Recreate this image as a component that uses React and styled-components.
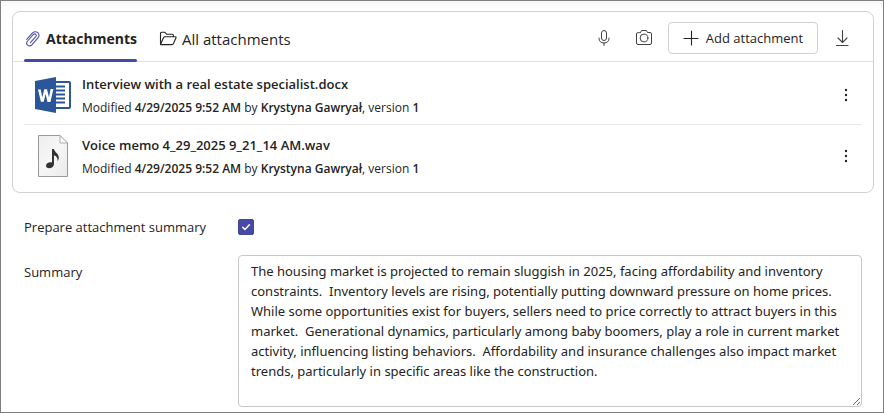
import React, { useState } from "react";
import styled, { createGlobalStyle } from "styled-components";

const GlobalStyle = createGlobalStyle`
  *, *::before, *::after { box-sizing: border-box; }
  body {
    margin: 0;
    background: #fff;
    color: #242424;
    font-family: "Open Sans", "Noto Sans", sans-serif;
    font-size: 13px;
    line-height: 20px;
  }
  button, textarea { font: inherit; color: inherit; }
`;

const Page = styled.main`
  min-height: 100vh;
  padding: 10px 9px 5px 11px;
  border: 1px solid #7f7f7f;
  background: linear-gradient(#f8f8f8, #fff 10px);
`;

const Card = styled.section`
  border: 1px solid #d1d1d1;
  border-radius: 8px;
  background: #fff;
`;

const CardHeader = styled.header`
  display: flex;
  align-items: stretch;
  justify-content: space-between;
  height: 50px;
  padding: 0 15px 0 11px;
  border-bottom: 1px solid #e0e0e0;
`;

const Tabs = styled.div`
  display: flex;
  gap: 22px;
`;

const Tab = styled.button`
  position: relative;
  display: flex;
  align-items: center;
  gap: 5px;
  height: 50px;
  padding: 3px 0 0;
  border: 0;
  background: none;
  font-size: ${(p) => (p.$active ? "14px" : "15px")};
  font-weight: ${(p) => (p.$active ? 700 : 400)};
  white-space: nowrap;
  cursor: pointer;

  &::after {
    content: "";
    position: absolute;
    inset: auto 0 0;
    height: 3px;
    border-radius: 2px;
    background: ${(p) => (p.$active ? "#444aa5" : "transparent")};
  }
`;

const Tools = styled.div`
  display: flex;
  align-items: center;
  gap: 8px;
  padding-top: 2px;
`;

const IconButton = styled.button`
  display: grid;
  place-items: center;
  width: 32px;
  height: 32px;
  padding: 0;
  border: 0;
  background: none;
  cursor: pointer;
`;

const AddButton = styled.button`
  display: flex;
  align-items: center;
  justify-content: center;
  gap: 7px;
  width: 150px;
  height: 32px;
  padding: 0;
  border: 1px solid #d1d1d1;
  border-radius: 4px;
  background: #fff;
  white-space: nowrap;
  cursor: pointer;
`;

const FileList = styled.ul`
  margin: 0;
  padding: 2px 11px 6px;
  list-style: none;
`;

const FileRow = styled.li`
  display: grid;
  grid-template-columns: 58px 1fr 32px;
  align-items: center;
  height: 61px;
  padding-top: 2px;
  border-bottom: 1px solid #e6e6e6;

  &:last-child { border-bottom-color: transparent; }
`;

const FileIcon = styled.span`
  display: grid;
  place-items: center;
`;

const FileText = styled.div`
  padding-top: 2px;
`;

const FileName = styled.div`
  font-weight: 600;
`;

const FileMeta = styled.div`
  margin-top: 4px;
  font-size: 12px;

  b { font-weight: 600; }
`;

const Form = styled.form`
  display: grid;
  grid-template-columns: 214px 1fr;
  row-gap: 18px;
  padding: 24px 12px 0 12px;
`;

const FieldLabel = styled.label`
  padding-top: ${(p) => (p.$tall ? "7px" : "0")};
`;

const Checkbox = styled.input`
  appearance: none;
  width: 16px;
  height: 16px;
  margin: 0;
  border: 1px solid #444791;
  border-radius: 2px;
  background: #fff;

  &:checked { background: #444aa5; }
`;

const CheckboxWrap = styled.span`
  position: relative;
  display: grid;
  align-self: center;
  width: 16px;
  height: 16px;

  svg {
    position: absolute;
    inset: 0;
    pointer-events: none;
  }
`;

const SummaryBox = styled.textarea`
  display: block;
  width: 100%;
  height: 152px;
  padding: 5px 12px;
  border: 1px solid #c7c7c7;
  border-radius: 4px;
  background: #fff;
  font-family: "Noto Sans", "Open Sans", sans-serif;
  outline: 0;
  resize: both;
`;

const line = { fill: "none", stroke: "currentColor", strokeLinecap: "round", strokeLinejoin: "round" };

const Paperclip = () => (
  <svg width="17" height="18" viewBox="0 0 17 18" {...line} stroke="#4f52b2" strokeWidth="1.1">
    <path d="M2.7 9.3 8 3.400C9.800 1.400 12.300 1.300 13.800 2.700s1.500 3.500.1 5.200L8.100 14.600c-1.300 1.500-3.300 1.700-4.500.6s-1.200-2.800 0-4.200L9.200 4.700c.8-.9 1.900-1 2.600-.4s.7 1.600 0 2.400L6.400 12.700" />
  </svg>
);

const Folder = () => (
  <svg width="18" height="18" viewBox="0 0 18 18" {...line} strokeWidth="1.1">
    <path d="M1.5 14.5v-11c0-.8.4-1.2 1.1-1.2h3.2l2 2h5.5c.7 0 1.1.4 1.1 1.1v1.3M1.5 14.5l3-6.7c.3-.7.7-1.1 1.4-1.1h10.4c.8 0 1 .5.7 1.1l-2.5 5.7c-.4.8-.8 1.1-1.5 1.1H2.300c-.6 0-.8-.1-.8-.5z" />
  </svg>
);

const Mic = () => (
  <svg width="20" height="20" viewBox="0 0 20 20" {...line} stroke="#424242">
    <rect x="7.5" y="2.5" width="5" height="10" rx="2.5" />
    <path d="M5 10v.5c0 2.6 2 4.5 5 4.5s5-1.9 5-4.5V10M10 15v2.5" />
  </svg>
);

const Camera = () => (
  <svg width="20" height="20" viewBox="0 0 20 20" {...line} stroke="#424242">
    <path d="M6.5 4.5 7.6 2.5h4.8l1.1 2H16A1.5 1.5 0 0 1 17.5 6v9A1.5 1.5 0 0 1 16 16.5H4A1.5 1.5 0 0 1 2.5 15V6A1.5 1.5 0 0 1 4 4.5z" />
    <circle cx="10" cy="10" r="3.9" />
  </svg>
);

const Plus = () => (
  <svg width="16" height="16" viewBox="0 0 16 16" {...line} strokeWidth="1.1">
    <path d="M8.5 1v14M1 8.5h14" />
  </svg>
);

const Download = () => (
  <svg width="20" height="20" viewBox="0 0 20 20" {...line} stroke="#424242" strokeWidth="1.1">
    <path d="M10.5 2.5v12M6 10l4.5 4.5L15 10M4.5 17.5h11.5" />
  </svg>
);

const More = () => (
  <svg width="4" height="16" viewBox="0 0 4 16" fill="#242424">
    <circle cx="2" cy="3" r="1.2" />
    <circle cx="2" cy="8" r="1.2" />
    <circle cx="2" cy="13" r="1.2" />
  </svg>
);

const Check = () => (
  <svg width="16" height="16" viewBox="0 0 16 16" {...line} stroke="#fff" strokeWidth="1.5">
    <path d="m4.7 8.2 2.2 2.2 4.5-4.7" />
  </svg>
);

const WordIcon = () => (
  <svg width="37" height="36" viewBox="0 0 37 36">
    <rect x="18" y="5" width="17" height="26" rx="1" fill="#fff" stroke="#2b579a" strokeWidth="2" />
    <path d="M20 9.5h10M20 13.5h10M20 17.5h10M20 21.5h10M20 25.5h10" stroke="#2b579a" strokeWidth="1.8" />
    <path d="M0 4 21 0v36L0 32z" fill="#2b579a" />
    <path d="M3 12.6h2.7l1.6 7.9 2-8.2h2.7l2 8.2 1.6-8.4h2.8L15.4 25h-2.9l-1.9-7.9L8.7 24.7H5.9z" fill="#fff" />
  </svg>
);

const AudioIcon = () => (
  <svg width="30" height="42" viewBox="0 0 30 42">
    <defs>
      <linearGradient id="sheet" x1="0" y1="0" x2="1" y2="1">
        <stop offset="0" stopColor="#ededed" />
        <stop offset="0.5" stopColor="#f6f6f6" />
        <stop offset="1" stopColor="#eaeaea" />
      </linearGradient>
    </defs>
    <path d="M.5.5H22l7.5 7.5v33.5H.5z" fill="url(#sheet)" stroke="#999" />
    <path d="M22 .5V8h7.5z" fill="#fff" stroke="#aaa" />
    <path d="M14 14h2c.3 3 4.8 4.5 4.8 8.5 0 1.7-.5 2.7-1.3 3.7.6-2.6-.5-4.8-3.5-6V29c0 2.5-2.1 4.2-4.8 4.2-2 0-3.2-1-3.2-2.5 0-2 2.2-3.5 4.3-3.5.7 0 1.2.1 1.7.3z" fill="#333" />
  </svg>
);

const FILES = [
  { name: "Interview with a real estate specialist.docx", Icon: WordIcon },
  { name: "Voice memo 4_29_2025 9_21_14 AM.wav", Icon: AudioIcon },
];

const SUMMARY =
  "The housing market is projected to remain sluggish in 2025, facing affordability and inventory constraints.  Inventory levels are rising, potentially putting downward pressure on home prices.  While some opportunities exist for buyers, sellers need to price correctly to attract buyers in this market.  Generational dynamics, particularly among baby boomers, play a role in current market activity, influencing listing behaviors.  Affordability and insurance challenges also impact market trends, particularly in specific areas like the construction.";

export default function App() {
  const [tab, setTab] = useState("own");
  const [prepare, setPrepare] = useState(true);
  const [summary, setSummary] = useState(SUMMARY);

  return (
    <>
      <GlobalStyle />
      <Page>
        <Card>
          <CardHeader>
            <Tabs role="tablist">
              <Tab role="tab" aria-selected={tab === "own"} $active={tab === "own"} onClick={() => setTab("own")}>
                <Paperclip />
                Attachments
              </Tab>
              <Tab role="tab" aria-selected={tab === "all"} $active={tab === "all"} onClick={() => setTab("all")}>
                <Folder />
                All attachments
              </Tab>
            </Tabs>
            <Tools>
              <IconButton aria-label="Record voice memo"><Mic /></IconButton>
              <IconButton aria-label="Take photo"><Camera /></IconButton>
              <AddButton><Plus />Add attachment</AddButton>
              <IconButton aria-label="Download"><Download /></IconButton>
            </Tools>
          </CardHeader>
          <FileList>
            {FILES.map(({ name, Icon }) => (
              <FileRow key={name}>
                <FileIcon><Icon /></FileIcon>
                <FileText>
                  <FileName>{name}</FileName>
                  <FileMeta>
                    Modified <b>4/29/2025 9:52 AM</b> by <b>Krystyna Gawryał</b>, version <b>1</b>
                  </FileMeta>
                </FileText>
                <IconButton aria-label={`More actions for ${name}`}><More /></IconButton>
              </FileRow>
            ))}
          </FileList>
        </Card>
        <Form>
          <FieldLabel htmlFor="prepare">Prepare attachment summary</FieldLabel>
          <CheckboxWrap>
            <Checkbox id="prepare" type="checkbox" checked={prepare} onChange={(e) => setPrepare(e.target.checked)} />
            {prepare && <Check />}
          </CheckboxWrap>
          <FieldLabel htmlFor="summary" $tall>Summary</FieldLabel>
          <SummaryBox id="summary" spellCheck={false} value={summary} onChange={(e) => setSummary(e.target.value)} />
        </Form>
      </Page>
    </>
  );
}
